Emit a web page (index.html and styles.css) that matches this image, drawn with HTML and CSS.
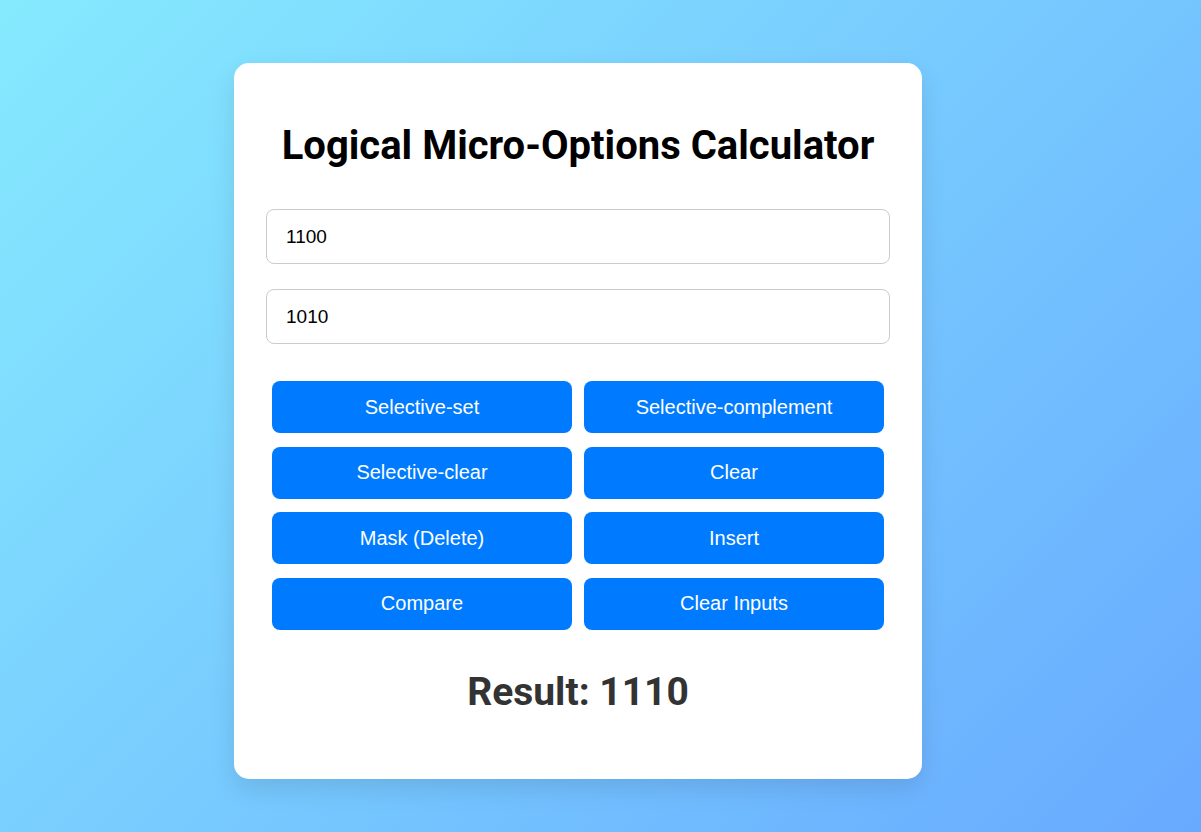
FILE: index.html
```html
<!DOCTYPE html>
<html>
<head>
<meta charset="utf-8">
<link rel="stylesheet" href="styles.css">
</head>
<body>
<div class="calc">
  <h1 class="title">Logical Micro-Options Calculator</h1>
  <input class="field" type="text" value="1100">
  <input class="field" type="text" value="1010">
  <div class="buttons">
    <button class="btn">Selective-set</button>
    <button class="btn">Selective-complement</button>
    <button class="btn">Selective-clear</button>
    <button class="btn">Clear</button>
    <button class="btn">Mask (Delete)</button>
    <button class="btn">Insert</button>
    <button class="btn">Compare</button>
    <button class="btn">Clear Inputs</button>
  </div>
  <div class="result">Result: 1110</div>
</div>
</body>
</html>
```
FILE: styles.css
```css
html, body {
  margin: 0;
  height: 100%;
}
body {
  background: linear-gradient(135deg, #86eafe 0%, #68aaff 100%);
  font-family: "Liberation Sans", Arial, sans-serif;
  display: flex;
  align-items: flex-start;
  padding: 63px 0 0 234px;
  box-sizing: border-box;
}
.calc {
  width: 688px;
  height: 716px;
  box-sizing: border-box;
  background: #fff;
  border-radius: 15px;
  box-shadow: 0 10px 25px rgba(0, 0, 0, 0.1);
  padding: 32px;
  display: flex;
  flex-direction: column;
}
.title {
  font-family: Roboto, sans-serif;
  font-weight: 700;
  font-size: 40px;
  line-height: 47px;
  text-align: center;
  margin: 27px 0 40px;
  color: #000;
}
.field {
  width: 100%;
  height: 55px;
  box-sizing: border-box;
  border: 1px solid #ccc;
  border-radius: 8px;
  padding: 0 19px;
  font-family: "Liberation Sans", Arial, sans-serif;
  font-size: 19px;
  color: #000;
  margin-bottom: 25px;
  outline: none;
}
.buttons {
  display: grid;
  grid-template-columns: 1fr 1fr;
  column-gap: 12px;
  row-gap: 13.67px;
  padding: 12px 6px 0;
}
.btn {
  height: 52px;
  background: #007bff;
  color: #fff;
  border: none;
  border-radius: 8px;
  font-family: "Liberation Sans", Arial, sans-serif;
  font-size: 20px;
}
.result {
  font-family: Roboto, sans-serif;
  font-weight: 700;
  font-size: 39px;
  color: #333;
  text-align: center;
  margin-top: 39px;
}
```
